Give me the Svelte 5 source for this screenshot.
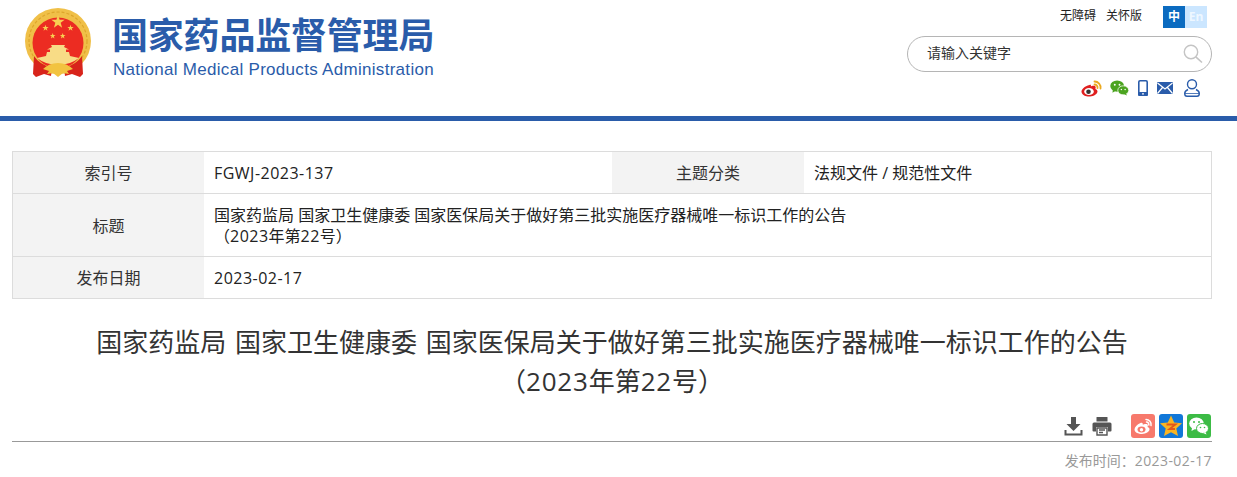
<script>
  const rows = [
    { id: 'a', cells: [['索引号', 'FGWJ-2023-137'], ['主题分类', '法规文件 / 规范性文件']] },
    { id: 'b', cells: [['标题', '国家药监局 国家卫生健康委 国家医保局关于做好第三批实施医疗器械唯一标识工作的公告\n（2023年第22号）']] },
    { id: 'c', cells: [['发布日期', '2023-02-17']] }
  ];

  const title = '国家药监局 国家卫生健康委 国家医保局关于做好第三批实施医疗器械唯一标识工作的公告\n（2023年第22号）';

  // latin runs get a bit of tracking, the reference font is wider than Open Sans
  const parts = (s) => s.split(/([A-Za-z0-9-]+)/);

  function star(cx, cy, r) {
    const pts = [];
    for (let i = 0; i < 10; i++) {
      const rad = i % 2 ? r * 0.4 : r;
      const a = -Math.PI / 2 + (i * Math.PI) / 5;
      pts.push(`${(cx + rad * Math.cos(a)).toFixed(2)},${(cy + rad * Math.sin(a)).toFixed(2)}`);
    }
    return pts.join(' ');
  }
</script>

{#snippet txt(s)}
  {#each parts(s) as p, i}{#if i % 2}<span class="lat">{p}</span>{:else}{p}{/if}{/each}
{/snippet}

<div class="page">
  <header class="top">
    <div class="brand">
      <svg class="emblem" viewBox="0 0 66 70" aria-hidden="true">
        <circle cx="33" cy="33" r="33" fill="#f0c048" />
        <circle cx="33" cy="33" r="29" fill="none" stroke="#dda52c" stroke-width="1.200" stroke-dasharray="3 2" />
        <circle cx="33" cy="35" r="25.500" fill="#ec2c22" />
        <polygon points={star(33, 14, 7)} fill="#f8cf52" />
        <polygon points={star(20.500, 20, 3.300)} fill="#f8cf52" />
        <polygon points={star(45.500, 20, 3.300)} fill="#f8cf52" />
        <polygon points={star(27.700, 28, 3)} fill="#f8cf52" />
        <polygon points={star(37.700, 28, 3)} fill="#f8cf52" />
        <path d="M26 37 H40 L39 39 L44 41.500 H41 V44 H44 L45 48 L54 50 Q45 57 33 57 Q21 57 12 50 L21 48 L22 44 H25 V41.500 H22 L27 39 Z" fill="#f8dc86" />
        <path d="M9 48 Q14 56 27 60 L26 68 L19 66 L11 69 L8 66 Z" fill="#d8241b" />
        <path d="M57 48 Q52 56 39 60 L40 68 L47 66 L55 69 L58 66 Z" fill="#d8241b" />
        <path d="M18 61 Q24 55 33 55 Q42 55 48 61 L42 63 L44 66 L38 65 L33 69 L28 65 L22 66 L24 63 Z" fill="#f2c340" />
      </svg>
      <div class="brandtext">
        <div class="cn">国家药品监督管理局</div>
        <div class="en">National Medical Products Administration</div>
      </div>
    </div>

    <div class="tools">
      <div class="toplinks">
        <span>无障碍</span>
        <span class="care">关怀版</span>
        <div class="lang"><span class="zh">中</span><span class="eng">En</span></div>
      </div>
      <div class="search">
        <span class="ph">请输入关键字</span>
        <svg viewBox="0 0 20 20" width="20" height="20" aria-hidden="true">
          <circle cx="8" cy="8" r="6.700" fill="none" stroke="#c4c4c4" stroke-width="1.400" />
          <path d="M12.800 12.800 L19 18.500" stroke="#c4c4c4" stroke-width="1.600" />
        </svg>
      </div>
      <div class="social">
        <svg viewBox="0 0 21 17" width="21" height="17" aria-hidden="true">
          <path d="M8.500 5 C3.500 6 0.300 9.500 0.500 12 C1 15.500 5.500 16.800 9 16.500 C13 16.200 16.500 13.800 16.500 11.500 C16.500 9.800 15 9.500 14.300 9 C15 7.500 14.800 6.200 13.500 5.800 C12 5.400 10.500 6 9.800 6.300 C10.200 5 9.800 4.600 8.500 5 Z" fill="#e01f1f" />
          <ellipse cx="8" cy="11.500" rx="4.800" ry="3.600" fill="#fff" />
          <circle cx="7.500" cy="11.700" r="2.300" fill="#333" />
          <path d="M13.500 1.500 a6 6 0 0 1 6 7 M13.500 4.500 a3 3 0 0 1 3 3.600" fill="none" stroke="#eba91f" stroke-width="1.800" stroke-linecap="round" />
        </svg>
        <svg viewBox="0 0 20 17" width="19" height="16" aria-hidden="true">
          <ellipse cx="7.500" cy="6.500" rx="7.300" ry="6" fill="#4ca420" />
          <path d="M3 10 l-.5 3.500 3.500 -2 z" fill="#4ca420" />
          <ellipse cx="14" cy="11" rx="5.800" ry="4.800" fill="#4ca420" stroke="#fff" stroke-width=".8" />
          <path d="M17 14.500 l1 2 -3.500 -1.500 z" fill="#4ca420" />
          <circle cx="5" cy="5" r="1" fill="#fff" /><circle cx="10" cy="5" r="1" fill="#fff" />
          <circle cx="12" cy="10" r=".8" fill="#fff" /><circle cx="16" cy="10" r=".8" fill="#fff" />
        </svg>
        <svg viewBox="0 0 10 16" width="10" height="16" aria-hidden="true">
          <rect x=".8" y=".8" width="8.400" height="14.400" rx="1.200" fill="none" stroke="#2a5caa" stroke-width="1.600" />
          <rect x="0" y="12" width="10" height="4" rx="1.200" fill="#2a5caa" />
          <circle cx="5" cy="13.800" r=".9" fill="#fff" />
        </svg>
        <svg viewBox="0 0 16 12" width="16" height="12" aria-hidden="true">
          <rect width="16" height="12" rx="1" fill="#2a5caa" />
          <path d="M0.500 1 L8 7 L15.500 1 M0.500 11.500 L5.500 5.500 M15.500 11.500 L10.500 5.500" fill="none" stroke="#fff" stroke-width="1.200" />
        </svg>
        <svg class="user" viewBox="0 0 16 18" width="16" height="18" aria-hidden="true">
          <circle cx="8" cy="5.200" r="4.500" fill="none" stroke="#2a5caa" stroke-width="1.400" />
          <path d="M4 10.500 C1.800 11.500 .7 13 .7 14.500 C.7 16.300 1.500 17.300 3 17.300 H13 C14.500 17.300 15.300 16.300 15.300 14.500 C15.300 13 14.200 11.500 12 10.500" fill="none" stroke="#2a5caa" stroke-width="1.400" />
          <path d="M1 14.500 H15" stroke="#2a5caa" stroke-width=".8" />
        </svg>
      </div>
    </div>
  </header>

  <main class="content">
    <div class="meta">
      {#each rows as row (row.id)}
        <div class="row {row.id}">
          {#each row.cells as cell (cell[0])}
            <div class="label">{cell[0]}</div>
            <div class="value"><div>{@render txt(cell[1])}</div></div>
          {/each}
        </div>
      {/each}
    </div>

    <h1 class="title">{@render txt(title)}</h1>

    <div class="actions">
      <svg class="down" viewBox="0 0 20 20" width="20" height="20" aria-hidden="true">
        <path d="M7 1 h5 v7 h4.500 L9.500 15 L2.500 8 H7 Z" fill="#555" />
        <path d="M1.500 14 v4.500 h16 V14" fill="none" stroke="#555" stroke-width="2" />
      </svg>
      <svg class="print" viewBox="0 0 20 20" width="20" height="20" aria-hidden="true">
        <path d="M4.500 5.500 V1.500 Q4.500 1 5 1 H15 Q15.500 1 15.500 1.500 V5.500 Z" fill="#555" />
        <path d="M2 6.500 H18 Q19.500 6.500 19.500 8 V14.500 Q19.500 15.500 18.500 15.500 H16 V11 H4 V15.500 H1.500 Q.5 15.500 .5 14.500 V8 Q.5 6.500 2 6.500 Z" fill="#555" />
        <path d="M5 12 H15 V19 H5 Z M7 14 H13 M7 16.500 H11" fill="#fff" stroke="#555" stroke-width="1.400" />
      </svg>
      <span class="share s-weibo">
        <svg viewBox="0 0 24 24" width="24" height="24" aria-hidden="true">
          <path d="M9.500 9 C6 10.500 3.500 13 3.500 15.500 C3.500 18.500 7.500 20 11 20 C15 20 18.500 17.800 18.500 15.300 C18.500 14 17.300 13.400 16.500 13.100 C17.200 11.500 17 10.200 15.500 10 C14 9.800 12.500 10.400 11.800 10.800 C12 9.300 11.300 8.300 9.500 9 Z" fill="#fff" />
          <ellipse cx="10.500" cy="15.500" rx="4" ry="3" fill="#f7796c" />
          <circle cx="10.500" cy="15.700" r="1.700" fill="#fff" />
          <path d="M15 5.500 a5 5 0 0 1 5 6 M15.500 8 a2.500 2.500 0 0 1 2.300 3" fill="none" stroke="#fff" stroke-width="1.500" stroke-linecap="round" />
        </svg>
      </span>
      <span class="share s-qzone">
        <svg viewBox="0 0 24 24" width="24" height="24" aria-hidden="true">
          <path d="M12 1.500 L15.200 8.500 L23 9.300 L17.300 14.500 L19 22 L12 18.300 L5 22 L6.700 14.500 L1 9.300 L8.800 8.500 Z" fill="#f8b423" />
          <path d="M7.500 10.500 H16.500 L10.500 15 H16" fill="none" stroke="#e2561a" stroke-width="1.800" />
        </svg>
      </span>
      <span class="share s-wechat">
        <svg viewBox="0 0 24 24" width="24" height="24" aria-hidden="true">
          <ellipse cx="9.500" cy="9.500" rx="7.300" ry="6" fill="#fff" />
          <path d="M5 13.500 l-.5 3.500 3.500 -2 z" fill="#fff" />
          <ellipse cx="15.500" cy="14.500" rx="6" ry="5" fill="#fff" stroke="#3cbb45" stroke-width="1" />
          <path d="M18.500 18 l1 2.500 -3.500 -1.500 z" fill="#fff" />
          <circle cx="7" cy="8" r="1" fill="#3cbb45" /><circle cx="12" cy="8" r="1" fill="#3cbb45" />
          <circle cx="13.500" cy="13.500" r=".8" fill="#3cbb45" /><circle cx="17.500" cy="13.500" r=".8" fill="#3cbb45" />
        </svg>
      </span>
    </div>

    <div class="pubtime">发布时间：<span class="lat">2023-02-17</span></div>
  </main>
</div>

<style>
  :global(body) {
    margin: 0;
    background: #fff;
    overflow: hidden;
  }

  .page {
    width: 1237px;
    font-family: "Open Sans", "Noto Sans CJK SC", sans-serif;
    color: #333;
  }

  .lat {
    letter-spacing: 0.03em;
  }

  .top {
    height: 116px;
    border-bottom: 5px solid #2a5caa;
    display: flex;
    justify-content: space-between;
    padding: 0 25px;
  }

  .brand {
    display: flex;
    align-items: flex-start;
    gap: 21px;
    padding-top: 8px;
  }

  .emblem {
    width: 66px;
    height: 70px;
    display: block;
  }

  .brandtext {
    padding-top: 4px;
  }

  .cn {
    font-size: 36px;
    line-height: 48px;
    font-weight: 700;
    color: #2a5caa;
    letter-spacing: -0.2px;
    white-space: nowrap;
  }

  .en {
    font-family: "Liberation Sans", sans-serif;
    font-size: 17px;
    line-height: 20px;
    letter-spacing: 0.3px;
    padding-left: 1px;
    color: #2a5caa;
    white-space: nowrap;
  }

  .tools {
    width: 305px;
    display: flex;
    flex-direction: column;
    align-items: flex-end;
  }

  .toplinks {
    display: flex;
    align-items: center;
    height: 22px;
    margin-top: 6px;
    font-size: 12px;
    line-height: 20px;
    color: #222;
    padding-right: 5px;
  }

  .toplinks > span {
    position: relative;
    top: -1px;
  }

  .care {
    margin-left: 10px;
  }

  .lang {
    display: flex;
    margin-left: 21px;
  }

  .lang span {
    width: 22px;
    height: 22px;
    line-height: 22px;
    text-align: center;
    font-weight: 700;
  }

  .zh {
    background: #0b6bc0;
    color: #fff;
  }

  .eng {
    background: #cbe6ff;
    color: #eef7ff;
  }

  .search {
    width: 305px;
    height: 36px;
    box-sizing: border-box;
    margin-top: 8px;
    border: 1px solid #b5b5b5;
    border-radius: 18px;
    display: flex;
    align-items: center;
    justify-content: space-between;
    padding: 0 8px 0 19px;
    font-size: 14px;
    line-height: 20px;
    color: #333;
  }

  .ph {
    position: relative;
    top: -1px;
  }

  .social {
    display: flex;
    align-items: center;
    gap: 9px;
    margin-top: 5px;
    padding-right: 12px;
    height: 22px;
  }

  .social svg:first-child {
    margin-right: -1px;
  }

  .user {
    margin-left: 2px;
  }

  .content {
    padding: 30px 25px 0 12px;
  }

  .meta {
    border: 1px solid #dcdcdc;
    border-bottom: 0;
    font-size: 16px;
  }

  .row {
    display: grid;
    grid-template-columns: 191px 408px 192px 1fr;
    border-bottom: 1px solid #dcdcdc;
    min-height: 41px;
  }

  .row.b,
  .row.c {
    grid-template-columns: 191px 1fr;
  }

  .row.b {
    min-height: 62px;
  }

  .label {
    background: #f3f3f3;
    display: flex;
    align-items: center;
    justify-content: center;
    padding-bottom: 1px;
  }

  .value {
    display: flex;
    align-items: center;
    padding: 1px 10px 0;
    line-height: 21px;
    white-space: pre-line;
    color: #222;
  }

  .title {
    margin: 24px 0 0;
    font-size: 26px;
    font-weight: 400;
    line-height: 39px;
    text-align: center;
    color: #333;
    white-space: pre-line;
    word-spacing: 2px;
  }

  .actions {
    display: flex;
    justify-content: flex-end;
    align-items: center;
    height: 29px;
    margin-top: 10px;
    padding: 0 1px 1px 0;
    border-bottom: 1px solid #999;
    gap: 4px;
  }

  .down {
    margin-right: 4px;
  }

  .print {
    margin-right: 15px;
  }

  .share {
    width: 24px;
    height: 24px;
    border-radius: 3px;
    display: block;
  }

  .share svg {
    display: block;
  }

  .s-weibo {
    background: #f7796c;
  }

  .s-qzone {
    background: #1177d8;
  }

  .s-wechat {
    background: #3cbb45;
  }

  .pubtime {
    text-align: right;
    font-size: 14px;
    line-height: 20px;
    margin-top: 9px;
    color: #999;
  }
</style>
